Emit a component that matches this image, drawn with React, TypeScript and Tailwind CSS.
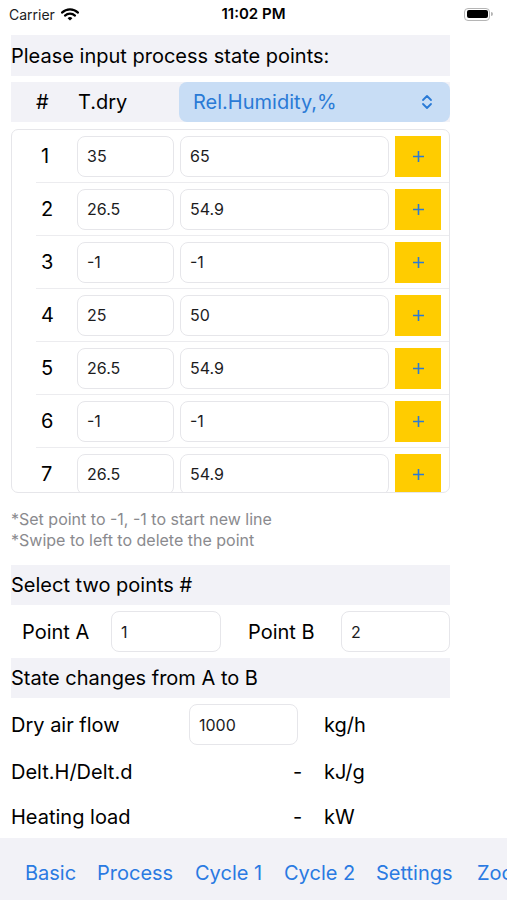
import React from 'react';

const rows = [
  ['35', '65'],
  ['26.5', '54.9'],
  ['-1', '-1'],
  ['25', '50'],
  ['26.5', '54.9'],
  ['-1', '-1'],
  ['26.5', '54.9'],
];

const tabs = [
  { label: 'Basic', w: 'w-[72px]' },
  { label: 'Process', w: 'w-[98px]' },
  { label: 'Cycle 1', w: 'w-[89px]' },
  { label: 'Cycle 2', w: 'w-[92px]' },
  { label: 'Settings', w: 'w-[101px]' },
  { label: 'Zoom', w: 'w-[80px]' },
];

function Wifi() {
  return (
    <svg width="18" height="13" viewBox="0 0 18 13" className="ml-[6px]">
      <path d="M1 4.6 A11.5 11.5 0 0 1 17 4.6" fill="none" stroke="#000" strokeWidth="2.2" strokeLinecap="round" />
      <path d="M4 7.6 A7.3 7.3 0 0 1 14 7.6" fill="none" stroke="#000" strokeWidth="2.2" strokeLinecap="round" />
      <path d="M9 12.5 L6.6 10.2 A3.4 3.4 0 0 1 11.4 10.2 Z" fill="#000" />
    </svg>
  );
}

function Battery() {
  return (
    <div className="flex items-center">
      <div className="w-[26px] h-[13px] rounded-[4px] border border-[#b5b5b5] p-[1.5px]">
        <div className="w-full h-full rounded-[2px] bg-black" />
      </div>
      <div className="w-[2px] h-[4px] rounded-r-sm bg-[#b5b5b5] ml-[1px]" />
    </div>
  );
}

function Plus() {
  return (
    <svg width="13" height="13" viewBox="0 0 13 13">
      <path d="M6.5 1 V12 M1 6.5 H12" stroke="#2a7ad6" strokeWidth="1.6" />
    </svg>
  );
}

function UpDown() {
  return (
    <svg width="12" height="16" viewBox="0 0 12 16">
      <path d="M2 6 L6 2 L10 6 M2 10 L6 14 L10 10" fill="none" stroke="#2a7ad6" strokeWidth="1.8" strokeLinecap="round" strokeLinejoin="round" />
    </svg>
  );
}

export default function App() {
  const field = 'bg-white border border-[#e6e6ea] rounded-[8px] h-[41px] flex items-center pl-[9px] text-[16px] text-[#1c1c1e]';

  return (
    <div
      className="w-[507px] h-[900px] bg-white overflow-hidden flex flex-col text-black"
      style={{ fontFamily: 'Inter, "Liberation Sans", sans-serif' }}
    >
      {/* status bar */}
      <div className="h-[28px] flex items-center px-[9px] relative">
        <div className="flex items-center text-[14px] text-[#1c1c1e]">
          Carrier
          <Wifi />
        </div>
        <div className="absolute left-0 right-0 text-center text-[15px] font-semibold pointer-events-none">11:02 PM</div>
        <div className="ml-auto mr-[5px]">
          <Battery />
        </div>
      </div>

      <div className="w-[439px] ml-[11px] flex flex-col">
        <div className="mt-[7px] h-[41px] bg-[#f2f2f7] flex items-center text-[20px]">
          Please input process state points:
        </div>

        {/* column header */}
        <div className="mt-[6px] h-[40px] bg-[#f2f2f7] flex items-center text-[20px]">
          <div className="w-[67px] pl-[25px]">#</div>
          <div className="w-[101px]">T.dry</div>
          <div className="flex-1 h-full bg-[#c8ddf5] rounded-[8px] flex items-center pl-[14px] pr-[17px] text-[#2a7ad6]">
            <span className="flex-1">Rel.Humidity,%</span>
            <UpDown />
          </div>
        </div>

        {/* points table */}
        <div className="mt-[7px] h-[364px] border border-[#e6e6ea] rounded-[7px] overflow-hidden">
          {rows.map((r, i) => (
            <div key={i} className="flex items-center h-[53px] ml-[24px] border-b border-[#ececef]">
              <div className="w-[41px] pl-[5px] text-[20px]">{i + 1}</div>
              <div className={`w-[97px] ${field}`}>{r[0]}</div>
              <div className={`ml-[6px] w-[209px] ${field}`}>{r[1]}</div>
              <div className="ml-[6px] w-[46px] h-[41px] bg-[#ffcc00] flex items-center justify-center">
                <Plus />
              </div>
            </div>
          ))}
        </div>

        <div className="mt-[16px] text-[16px] leading-[21px] text-[#8a8a8e]">
          <div>*Set point to -1, -1 to start new line</div>
          <div>*Swipe to left to delete the point</div>
        </div>

        <div className="mt-[14px] h-[40px] bg-[#f2f2f7] flex items-center text-[20px]">
          Select two points #
        </div>

        <div className="mt-[6px] h-[41px] flex items-center text-[20px]">
          <div className="w-[100px] shrink-0 pl-[11px]">Point A</div>
          <div className={`w-[110px] shrink-0 ${field}`}>1</div>
          <div className="w-[120px] shrink-0 pl-[27px]">Point B</div>
          <div className={`w-[109px] shrink-0 ${field}`}>2</div>
        </div>

        <div className="mt-[6px] h-[40px] bg-[#f2f2f7] flex items-center text-[20px]">
          State changes from A to B
        </div>

        <div className="mt-[6px] h-[41px] flex items-center text-[20px]">
          <div className="w-[178px]">Dry air flow</div>
          <div className={`w-[109px] ${field}`}>1000</div>
          <div className="pl-[26px]">kg/h</div>
        </div>

        <div className="mt-[6px] h-[41px] flex items-center text-[20px]">
          <div className="w-[282px]">Delt.H/Delt.d</div>
          <div className="w-[31px]">-</div>
          <div>kJ/g</div>
        </div>

        <div className="mt-[4px] h-[41px] flex items-center text-[20px]">
          <div className="w-[282px]">Heating load</div>
          <div className="w-[31px]">-</div>
          <div>kW</div>
        </div>
      </div>

      {/* tab bar */}
      <div className="mt-auto h-[62px] bg-[#f2f2f7] flex items-start pt-[20px] pl-[25px] whitespace-nowrap overflow-hidden text-[20px] text-[#2a7ae2]">
        {tabs.map((t) => (
          <div key={t.label} className={`shrink-0 ${t.w}`}>{t.label}</div>
        ))}
      </div>
    </div>
  );
}
